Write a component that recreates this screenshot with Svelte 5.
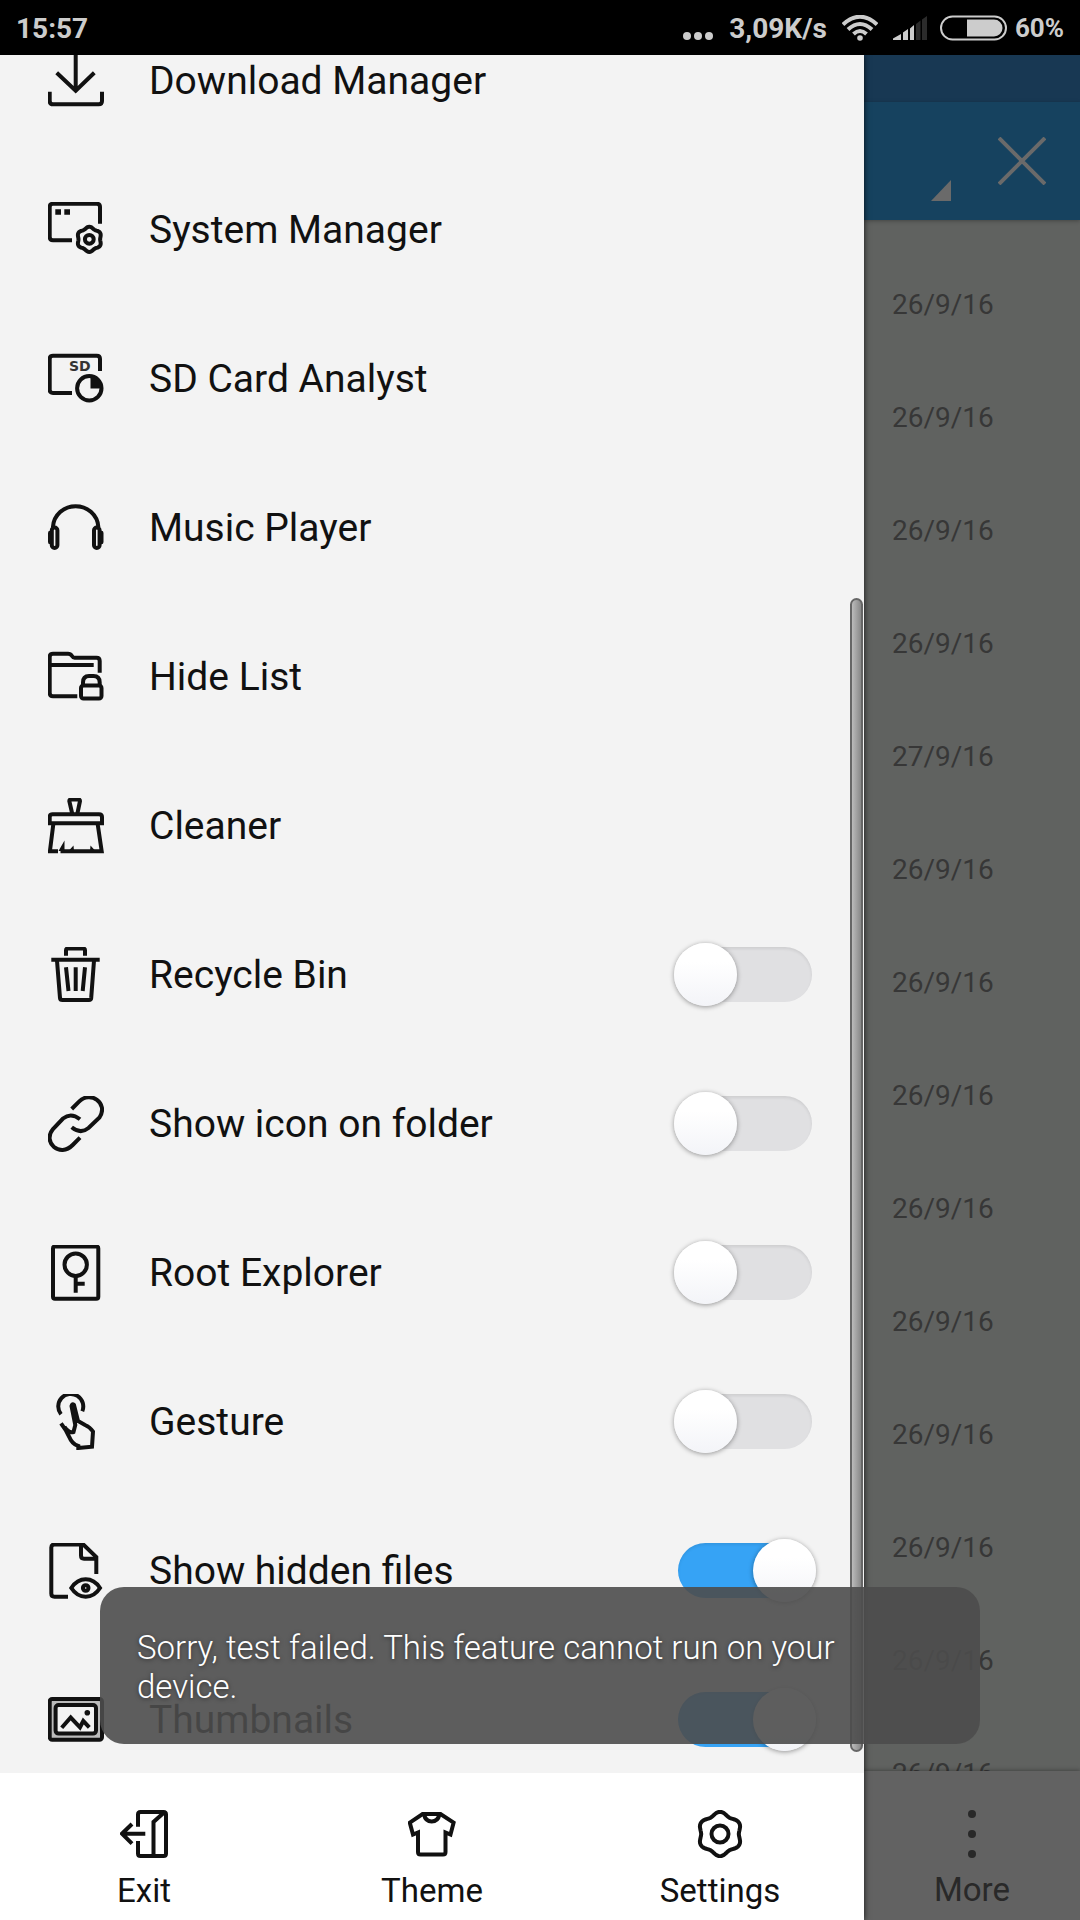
<script>
  const gear = (cx, cy, r, wave) => {
    const points = [];
    for (let deg = 0; deg < 360; deg += 5) {
      const a = (deg * Math.PI) / 180;
      const d = r + wave * Math.cos(6 * (a - Math.PI / 2));
      points.push(`${(cx + d * Math.cos(a)).toFixed(1)} ${(cy + d * Math.sin(a)).toFixed(1)}`);
    }
    return `M${points.join('L')}Z`;
  };

  let items = $state([
    { icon: 'download', label: 'Download Manager' },
    { icon: 'system', label: 'System Manager' },
    { icon: 'sd', label: 'SD Card Analyst' },
    { icon: 'music', label: 'Music Player' },
    { icon: 'hide', label: 'Hide List' },
    { icon: 'cleaner', label: 'Cleaner' },
    { icon: 'trash', label: 'Recycle Bin', on: false },
    { icon: 'link', label: 'Show icon on folder', on: false },
    { icon: 'root', label: 'Root Explorer', on: false },
    { icon: 'gesture', label: 'Gesture', on: false },
    { icon: 'hidden', label: 'Show hidden files', on: true },
    { icon: 'thumbs', label: 'Thumbnails', on: true },
  ]);

  const actions = ['Exit', 'Theme', 'Settings'];

  const dates = Array.from({ length: 14 }, (_, i) => (i === 4 ? '27/9/16' : '26/9/16'));
</script>

{#snippet menuIcon(name)}
  <svg class="icon" viewBox="0 0 56 56" aria-hidden="true">
    {#if name === 'download'}
      <path d="M27.7 0V38M8.7 19.7L27.7 37.8L46.3 19.7" />
      <path d="M1.7 38.7V48Q1.7 51.3 5 51.3H50.7Q54 51.3 54 48V38.7" />
    {:else if name === 'system'}
      <path d="M24 38.3H5Q1.7 38.3 1.7 35V5Q1.7 1.7 5 1.7H48.7Q52 1.7 52 5V21.7" />
      <path class="fill" d="M7.3 7.3H13V12.7H7.3ZM16.3 7.3H22V12.7H16.3Z" />
      <path d={gear(41.3, 37.3, 11.7, 0.9)} />
      <circle cx="41.3" cy="37.3" r="4.4" />
    {:else if name === 'sd'}
      <path d="M24 42H5Q1.7 42 1.7 38.7V8Q1.7 4.7 5 4.7H48.7Q52 4.7 52 8V20" />
      <text x="21" y="20">SD</text>
      <circle cx="41.3" cy="37.3" r="12.2" />
      <path class="fill" d="M42.5 37.5V25A12.5 12.5 0 0 1 54 37.5Z" />
    {:else if name === 'music'}
      <path d="M5 27V26.7A22.7 22 0 0 1 50.3 26.7V27" />
      <rect x="3.8" y="27.5" width="5.6" height="20.5" rx="2.8" />
      <rect x="46" y="27.5" width="5.6" height="20.5" rx="2.8" />
      <path class="fill" d="M3.5 30.7H2Q0 30.7 0 33V42Q0 44.3 2 44.3H3.5ZM52 30.7H53.5Q55.5 30.7 55.5 33V42Q55.5 44.3 53.5 44.3H52Z" />
    {:else if name === 'hide'}
      <path d="M29.3 47.3H5Q1.7 47.3 1.7 44V8Q1.7 4.7 5 4.7H20Q22.5 4.7 24 7T27.5 8.7H48.5Q51.7 8.7 51.7 12V23.7M1.7 16H45.7" />
      <rect x="33" y="36.5" width="20.5" height="13" rx="2.5" />
      <path d="M35 36V33.5Q35 27 41 27H45.5Q51.7 27 51.7 33.5V36" />
    {:else if name === 'cleaner'}
      <path d="M24.3 16L21.3 3Q21.3 1.5 23 1.5H30.3Q32 1.5 32 3L29.3 16" />
      <path d="M1.7 25.3V19Q1.7 16.3 4.5 16.3H51Q54 16.3 54 19V25.3Z" />
      <path d="M5.3 26.3L1.9 53.3H10M12.5 53.3H53.7L49.7 26.3" />
      <path class="fill" d="M16.5 42.5L10.5 53H16.5ZM25.5 47.5L20.5 53H26ZM42.5 47.5L47.5 53H42Z" />
    {:else if name === 'trash'}
      <path d="M18 8.7V3.3Q18 1.5 20 1.5H35Q37 1.5 37 3.3V8.7M3.3 12.7H51.7" />
      <path d="M9 13.7L12 51Q12.2 53 14.5 53H41Q43 53 43.2 51L46 13.7" />
      <path d="M18 20.3L20.5 44M27.7 20.3V44M37 20.3L34.7 44" />
    {:else if name === 'link'}
      <path d="M23.7 13L31 5.7C42-6 61 7 51.5 21.5L40.5 32C35 36.5 29.5 36 23.7 31.3" />
      <path d="M32 23.3C26 18.5 20.5 18 15 22.5L5 33C-6 46.5 12 62 24.7 49L32 41.7" />
    {:else if name === 'root'}
      <rect x="5" y="1.5" width="45.3" height="52.2" rx="2" />
      <circle cx="27.7" cy="19.7" r="11.2" />
      <path d="M27.7 31V47.7M27.7 38.7H36.7" />
    {:else if name === 'gesture'}
      <path d="M13 20.3A12.500 12.500 0 1 1 34.3 17.3" />
      <path d="M13 29.3L17.7 36L21.3 43Q24 50 30.3 52V54L44 52.7L45 37.5Q42 33 37 31L30 27L26 11Q24 9 23.5 12L27.3 31L25.5 38Q21 39.5 16.5 33" />
      <path class="thick" d="M24.8 12L28.5 29" />
    {:else if name === 'hidden'}
      <path d="M20 53.7H6.5Q3.3 53.7 3.3 50.5V4.5Q3.3 1.5 6.5 1.5H35.3L48.3 14V31" />
      <path d="M33 1.5V12.5Q33 15.7 36 15.7H48.3" />
      <path d="M23.3 45Q29 36.3 37.7 36.3T52 45Q46.5 53.7 37.7 53.7T23.3 45Z" />
      <circle cx="37.7" cy="45" r="2.8" />
    {:else if name === 'thumbs'}
      <rect class="mat" x="1.7" y="7" width="52.3" height="40.7" rx="2.5" />
      <rect class="photo" x="7.6" y="13" width="40.4" height="28.6" rx="3" />
      <path d="M13.7 35.7L22.7 25.5L32 35.3L35.3 29L41.3 35.3" />
      <circle class="fill" cx="39.3" cy="20.7" r="2.8" />
    {/if}
  </svg>
{/snippet}

<div class="screen">
  <header class="status">
    <time>15:57</time>
    <div class="indicators">
      <svg class="dots" width="30" height="8" viewBox="0 0 30 8" aria-hidden="true">
        <circle cx="4" cy="4" r="4" /><circle cx="15" cy="4" r="4" /><circle cx="26" cy="4" r="4" />
      </svg>
      <span class="speed">3,09K/s</span>
      <svg class="wifi" width="36" height="26" viewBox="0 0 36 26" aria-hidden="true">
        <path d="M1 9.5Q18-6 35 9.5M6 14.5Q18 3.5 30 14.5M11.5 19Q18 13 24.5 19" />
        <circle cx="18" cy="23" r="2.8" />
      </svg>
      <svg class="signal" width="34" height="24" viewBox="0 0 34 24" aria-hidden="true">
        <path d="M0 24V22.5L8 18V24ZM10 24V16.5L15 13V24ZM17 24V12.5L21 9V24Z" />
        <path class="weak" d="M23 24V8L27.5 4.5V24ZM29 24V3.5L34 0V24Z" />
      </svg>
      <svg class="battery" width="67" height="26" viewBox="0 0 67 26" aria-hidden="true">
        <rect x="1" y="1.5" width="65" height="23" rx="11.5" />
        <path d="M27 4.5H54A8.5 8.5 0 0 1 54 21.5H27Z" />
      </svg>
      <span class="percent">60%</span>
    </div>
  </header>

  <div class="body">
    <aside class="drawer">
      <div class="scroller">
        <ul>
          {#each items as item (item.icon)}
            <li>
              {#if item.on === undefined}
                <button class="item">
                  {@render menuIcon(item.icon)}
                  <span>{item.label}</span>
                </button>
              {:else}
                <label class="item">
                  {@render menuIcon(item.icon)}
                  <span>{item.label}</span>
                  <input type="checkbox" role="switch" bind:checked={item.on} />
                </label>
              {/if}
            </li>
          {/each}
        </ul>
        <div class="scrollbar"></div>
      </div>

      <nav>
        {#each actions as action}
          <button class="action">
            <svg class="icon" viewBox="0 0 48 48" aria-hidden="true">
              {#if action === 'Exit'}
                <path d="M18 16.7V4.5Q18 2 20.5 2H43.5Q46 2 46 4.5V43.5Q46 46 43.5 46H20.5Q18 46 18 43.5V31" />
                <path d="M33.5 46V12L43.5 3M2 23.7H25.3M12 14L2 23.7L12 33.7" />
              {:else if action === 'Theme'}
                <path d="M14.6 4H32.5L45.6 12.7L42.5 24.5L37.5 22.5V42Q37.5 44.5 35 44.5H12.5Q10 44.5 10 42V22.5L5 24.5L1.8 12.7Z" />
                <path d="M16 4.5Q17.5 11.5 23.7 11.5T31.5 4.5" />
              {:else}
                <path d={gear(24, 24, 20.5, 1.7)} />
                <circle cx="24" cy="24" r="8.5" />
              {/if}
            </svg>
            <span>{action}</span>
          </button>
        {/each}
      </nav>
    </aside>

    <main>
      <div class="strip"></div>
      <div class="toolbar">
        <svg class="corner" width="20" height="21" viewBox="0 0 20 21" aria-hidden="true"><path d="M20 0V21H0Z" /></svg>
        <button class="close" aria-label="Close">
          <svg width="48" height="48" viewBox="0 0 48 48" aria-hidden="true"><path d="M1 1L47 47M47 1L1 47" /></svg>
        </button>
      </div>
      <ul class="dates">
        {#each dates as date}
          <li>{date}</li>
        {/each}
      </ul>
      <button class="action more">
        <svg class="icon" viewBox="0 0 48 48" aria-hidden="true">
          <circle cx="24" cy="4" r="4" /><circle cx="24" cy="24" r="4" /><circle cx="24" cy="44" r="4" />
        </svg>
        <span>More</span>
      </button>
    </main>
  </div>

  <div class="toast" role="status">Sorry, test failed. This feature cannot run on your device.</div>
</div>

<style>
  :global(body) {
    margin: 0;
  }

  .screen {
    position: relative;
    height: 100vh;
    display: flex;
    flex-direction: column;
    overflow: hidden;
    font-family: Roboto, sans-serif;
    color: #111;
  }

  ul {
    margin: 0;
    padding: 0;
    list-style: none;
  }

  button {
    padding: 0;
    border: 0;
    background: none;
    color: inherit;
    font: inherit;
    text-align: left;
  }

  .status {
    flex: none;
    box-sizing: border-box;
    height: 55px;
    padding: 1px 16px 0;
    display: flex;
    align-items: center;
    justify-content: space-between;
    background: #000;
    color: #ccc;
    font-size: 28px;
    font-weight: 700;
  }

  .indicators {
    display: flex;
    align-items: center;
  }

  .indicators svg {
    fill: #ccc;
  }

  .percent {
    font-size: 26px;
  }

  .dots {
    margin: 16px 16px 0 0;
  }

  .wifi {
    margin: 0 15px;
  }

  .wifi path {
    fill: none;
    stroke: #ccc;
    stroke-width: 4;
  }

  .signal {
    margin-right: 13px;
  }

  .indicators .weak {
    fill: #2b2b2b;
  }

  .battery {
    margin-right: 8px;
  }

  .battery rect {
    fill: none;
    stroke: #ccc;
    stroke-width: 2;
  }

  .body {
    flex: 1;
    min-height: 0;
    display: flex;
  }

  .drawer {
    position: relative;
    z-index: 1;
    flex: 4;
    min-width: 0;
    display: flex;
    flex-direction: column;
    background: #f3f3f3;
    box-shadow: 0 0 6px rgba(0, 0, 0, 0.8);
  }

  .scroller {
    position: relative;
    flex: 1;
    min-height: 0;
    overflow: hidden;
  }

  /* scrolled to the end of the menu */
  .scroller ul {
    margin-top: -49px;
  }

  .item {
    box-sizing: border-box;
    width: 100%;
    height: 149px;
    padding: 0 48px;
    display: flex;
    align-items: center;
    gap: 45px;
    font-size: 39px;
    line-height: 48px;
  }

  .item span {
    flex: 1;
  }

  .icon {
    flex: none;
    width: 56px;
    height: 56px;
    fill: none;
    stroke: #111;
    stroke-width: 4;
  }

  .icon .fill {
    fill: #111;
    stroke: none;
  }

  .icon .thick {
    stroke-width: 5;
  }

  .icon .mat {
    fill: #bbb;
  }

  .icon .photo {
    fill: #f3f3f3;
  }

  .icon text {
    fill: #333;
    stroke: none;
    font: 700 14px 'DejaVu Sans', sans-serif;
  }

  input {
    position: relative;
    appearance: none;
    flex: none;
    width: 142px;
    height: 63px;
    margin: 0;
  }

  input::before {
    content: '';
    position: absolute;
    inset: 4px;
    border-radius: 28px;
    background: #e0e0e2;
    box-shadow: inset 0 2px 3px rgba(0, 0, 0, 0.08);
  }

  input::after {
    content: '';
    position: absolute;
    inset: 0 auto 0 0;
    width: 63px;
    border-radius: 50%;
    background: linear-gradient(#fff 30%, #f3f4f8);
    box-shadow: 0 1px 5px rgba(0, 0, 0, 0.4);
  }

  input:checked::before {
    background: #36a3f5;
  }

  input:checked::after {
    inset: 0 0 0 auto;
  }

  .scrollbar {
    position: absolute;
    top: 543px;
    right: 1px;
    bottom: 21px;
    box-sizing: border-box;
    width: 13px;
    border: 2px solid #666;
    border-radius: 7px;
    background: linear-gradient(90deg, #bbb, #888);
  }

  nav {
    flex: none;
    display: flex;
    background: #fff;
  }

  .action {
    flex: 1;
    box-sizing: border-box;
    height: 147px;
    padding-top: 37px;
    display: flex;
    flex-direction: column;
    align-items: center;
    gap: 13px;
    font-size: 33px;
    line-height: 40px;
  }

  .action .icon {
    width: 48px;
    height: 48px;
  }

  main {
    flex: 1;
    min-width: 0;
    display: flex;
    flex-direction: column;
    background: #606260;
  }

  .strip {
    flex: none;
    height: 47px;
    background: #183853;
  }

  .toolbar {
    flex: none;
    height: 118px;
    box-sizing: border-box;
    padding-right: 34px;
    display: flex;
    align-items: center;
    justify-content: flex-end;
    gap: 47px;
    background: #16425f;
    box-shadow: 0 1px 4px rgba(0, 0, 0, 0.3);
  }

  .corner {
    margin-top: 58px;
    fill: #6a6a6a;
  }

  .close {
    display: flex;
  }

  .close path {
    stroke: #6a6a6a;
    stroke-width: 4;
  }

  .dates {
    flex: 1;
    min-height: 0;
    box-sizing: border-box;
    padding: 28px 0 0 28px;
    overflow: hidden;
    color: #373737;
    font-size: 28px;
    line-height: 113px;
  }

  .more {
    flex: none;
    height: 149px;
    padding-top: 39px;
    gap: 12px;
    background: #626262;
    color: #292929;
    box-shadow: 0 -1px 4px rgba(0, 0, 0, 0.3);
  }

  .more .icon {
    fill: #292929;
    stroke: none;
  }

  .toast {
    position: absolute;
    z-index: 2;
    left: 100px;
    right: 100px;
    bottom: 176px;
    box-sizing: border-box;
    padding: 41px 60px 38px 37px;
    border-radius: 24px;
    background: rgba(77, 77, 77, 0.9);
    color: #fff;
    font-size: 33px;
    font-weight: 300;
    line-height: 39px;
    text-shadow: 0 1px 4px rgba(0, 0, 0, 0.5);
  }
</style>
